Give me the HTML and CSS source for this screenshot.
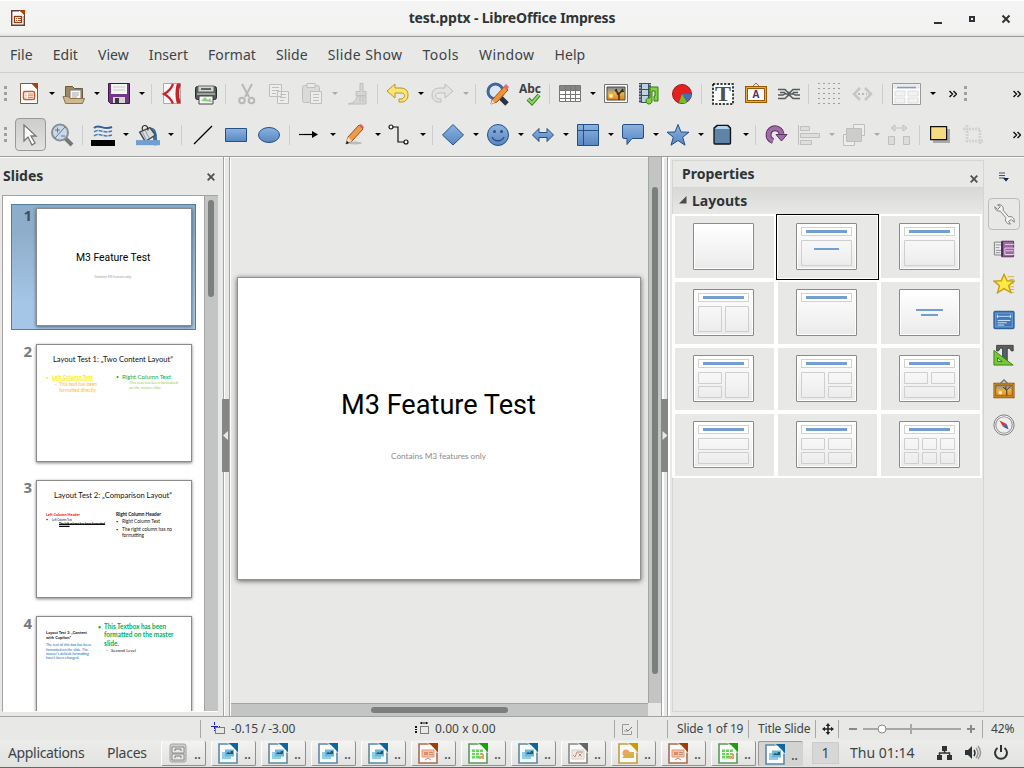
FILE: index.html
```html
<!DOCTYPE html>
<html lang="en">
<head>
<meta charset="utf-8">
<title>test.pptx - LibreOffice Impress</title>
<link rel="stylesheet" href="styles.css">
</head>
<body>
<svg class="sprite" width="0" height="0">
<defs>
<linearGradient id="blue" x2="0" y2="1"><stop offset="0" stop-color="#8db3df"/><stop offset="1" stop-color="#5786c2"/></linearGradient>
<linearGradient id="page" x2="0" y2="1"><stop offset="0" stop-color="#fff"/><stop offset="1" stop-color="#ebebeb"/></linearGradient>
<linearGradient id="sunset" x2="0" y2="1"><stop offset="0" stop-color="#6a88a8"/><stop offset=".5" stop-color="#e9b14c"/><stop offset="1" stop-color="#e67e13"/></linearGradient>
<symbol id="writer" viewBox="0 0 20 21"><path d="M1 1H14L19 7V20H1Z" fill="#fafafa" stroke="#5e88a5" stroke-width="1.6"/><path d="M11 0H20V9Z" fill="#0c66a4"/><path d="M10 .5L19.5 10" stroke="#fff"/><path d="M4 9h9v7H4Z" fill="#8fcde8"/><path d="M7 6.500h9v7H7Z" fill="#6db6da"/><path d="M8 11l2-2 2 1 1-2h2v3H8Z" fill="#1c5a74"/></symbol>
<symbol id="impress" viewBox="0 0 20 21"><path d="M1 1H14L19 7V20H1Z" fill="#fafafa" stroke="#a76c50" stroke-width="1.600"/><path d="M11 0H20V9Z" fill="#a33e03"/><path d="M10 .5L19.500 10" stroke="#fff"/><path d="M4 7h12v7H4Z" fill="#f8c0a2" stroke="#e09a7c"/><path d="M6 9h4v3H6z" fill="#e28a64"/><path d="M11 9.500h4M11 11.500h4M7 17l3-2 3 2" fill="none" stroke="#c98a70"/></symbol>
<symbol id="calc" viewBox="0 0 20 21"><path d="M1 1H14L19 7V20H1Z" fill="#fafafa" stroke="#5b985b" stroke-width="1.600"/><path d="M11 0H20V9Z" fill="#18a303"/><path d="M10 .5L19.500 10" stroke="#fff"/><path d="M4 6.500h11v9H4z" fill="#6fcf60"/><path d="M4 9.500h11M4 12.500h11M7.500 6.500v9M11.500 6.500v9" stroke="#e6ffe3"/><path d="M11 16v-3h2v3m1 0v-5h2v5" fill="#e6a36d"/></symbol>
<symbol id="math" viewBox="0 0 20 21"><path d="M1 1H14L19 7V20H1Z" fill="#fafafa" stroke="#888" stroke-width="1.600"/><path d="M11 0H20V9Z" fill="#666"/><path d="M10 .5L19.500 10" stroke="#fff"/><path d="M4 7h12v9H4z" fill="#f2e8df" stroke="#d9cdc4"/><path d="M5 12l2 2 2-5h6M10.500 10.500l3 3m0-3l-3 3" fill="none" stroke="#b0938a"/></symbol>
<symbol id="draw" viewBox="0 0 20 21"><path d="M1 1H14L19 7V20H1Z" fill="#fafafa" stroke="#c19e3f" stroke-width="1.600"/><path d="M11 0H20V9Z" fill="#c99c00"/><path d="M10 .5L19.500 10" stroke="#fff"/><circle cx="8" cy="10" r="3.500" fill="#eda363"/><path d="M4 15l4-4 4 4zM10 9h6v6h-6z" fill="#d9b04a"/></symbol>
<symbol id="cabinet" viewBox="0 0 20 21"><rect x="2" y="1" width="16" height="18" rx="2" fill="#d0d0cd" stroke="#a2a29f"/><path d="M4 4h12v6H4zM4 11h12v6H4z" fill="#e8e8e5" stroke="#8b8b89"/><path d="M7 8V6h6v2M7 15v-2h6v2" fill="none" stroke="#777"/></symbol>
<symbol id="frame" viewBox="0 0 61 47"><rect x=".5" y=".5" width="60" height="46" rx=".5" fill="#fff" stroke="#8b8b89"/><rect x="2" y="2" width="57" height="43" fill="url(#page)"/></symbol>
<symbol id="titled" viewBox="0 0 61 47"><use href="#frame"/><rect x="5.500" y="4.500" width="50" height="8" fill="#fff" stroke="#d2d2d2"/><path d="M10 7h41v3H10z" fill="#729fcf"/></symbol>
</defs>
</svg>

<header class="titlebar">
  <svg class="app-icon" viewBox="0 0 14 16"><path d="M.7.700H10L13.300 4v11.300H.7Z" fill="#fafafa" stroke="#5b4137" stroke-width="1.400"/><path d="M8 0h6v5z" fill="#b04100"/><path d="M8 1l5 5" stroke="#fff"/><rect x="3.500" y="6.500" width="7" height="6" fill="#fff" stroke="#8d3b13" stroke-width="1.300"/><path d="M5 8.500h1M7 8.500h3M5 10.500h1M7 10.500h3" stroke="#a44a1f"/></svg>
  <h1 class="window-title">test.pptx - LibreOffice Impress</h1>
  <svg class="window-buttons" viewBox="0 0 80 14"><path d="M2 12h8" stroke="#2e3436" stroke-width="2"/><rect x="38" y="6" width="4" height="4" fill="none" stroke="#2e3436" stroke-width="2"/><path d="M70.500 4.500l7 7m0-7l-7 7" stroke="#2e3436" stroke-width="2"/></svg>
</header>

<nav class="menubar"><span>File</span><span>Edit</span><span>View</span><span>Insert</span><span>Format</span><span>Slide</span><span class="m-show">Slide Show</span><span class="m-tools">Tools</span><span class="m-win">Window</span><span>Help</span></nav>

<div class="toolbar">
  <i class="grip"></i>
  <svg class="ic" viewBox="0 0 24 24"><path d="M3.500 1.500H15L20.500 7v14.500h-17z" fill="#fcfcfc" stroke="#7d5948"/><path d="M14 1h7v7z" fill="#a3430f"/><path d="M13 2l7 7" stroke="#fff"/><rect x="6.500" y="9.500" width="11" height="8" rx="1.500" fill="#fff" stroke="#cc5b23" stroke-width="1.500"/><path d="M8.500 12h1M11 12h5M8.500 13.800h1M11 13.800h5M8.500 15.600h1M11 15.600h5" stroke="#d05f29" stroke-width=".8"/></svg><i class="dd"></i>
  <svg class="ic" viewBox="0 0 24 24"><path d="M3.500 16V4.500h7l2 2h8V16" fill="#a08762" stroke="#6c5a3c"/><path d="M8 8h11v10H8z" fill="#f8f8f8" stroke="#777"/><path d="M10 11h7M10 13h7M10 15h5" stroke="#aaa"/><path d="M1 14.500h5l2 2h14.500l-2 5h-17z" fill="#cdb890" stroke="#8c744b"/></svg><i class="dd"></i>
  <svg class="ic" viewBox="0 0 24 24"><path d="M1.500 1.500h21v20h-19l-2-2z" fill="#743687" stroke="#3f174d"/><path d="M4 2h16v10H4z" fill="#f4f4f1"/><path d="M6 5h12M6 8h12" stroke="#c8c8c5"/><path d="M6 15h12v6H6z" fill="#d6d6d1"/><path d="M8 16h4v5H8z" fill="#41354a"/></svg><i class="dd"></i><i class="sep"></i>
  <svg class="ic" viewBox="0 0 24 24"><path d="M3.500 1.500h17v20h-17z" fill="#f8f8f8" stroke="#aaa"/><path d="M17 1.500c-2 5-2 15 0 20h3.500v-2c-2-5-2-11 0-16v-2z" fill="#c72329"/><path d="M13 2C11 7 8 10 4 12c4 2 7 5 9 9.500" fill="none" stroke="#c72329" stroke-width="2.200"/></svg>
  <svg class="ic nudge" viewBox="0 0 24 24"><rect x="1.500" y="4.500" width="21" height="13" rx="2" fill="#525a59" stroke="#252b2b"/><path d="M4 4h16v6H4z" fill="#d2d5d4" stroke="#666"/><path d="M7 7h10" stroke="#606564" stroke-width="2"/><path d="M3 12h18" stroke="#9ba19f" stroke-width="2"/><path d="M5 14h14v8H5z" fill="#f6f6f6" stroke="#444"/><path d="M7 19l4-4 3 3 2-2 2 4z" fill="#8bd084"/></svg><i class="sep"></i>
  <svg class="ic faded" viewBox="0 0 24 24" fill="none" stroke="#777"><path d="M8 2l7 13M18 2l-7 13" stroke-width="2"/><circle cx="8" cy="18.500" r="2.800" stroke-width="2"/><circle cx="17.500" cy="18.500" r="2.800" stroke-width="2"/></svg>
  <svg class="ic faded" viewBox="0 0 24 24" fill="#f4f4f4" stroke="#888"><path d="M2.500 2.500h12v12h-12zM10.500 9.500h11v12h-11z"/><path d="M5 5.500h7M5 8.500h7M5 11.500h4M13 12.500h6M13 15.500h6M13 18.500h4"/></svg>
  <svg class="ic faded" viewBox="0 0 24 24" fill="#c7c7c5" stroke="#888"><rect x="2.500" y="3.500" width="17" height="17" rx="2"/><path d="M7 1.500h8v4H7z" fill="#eee"/><path d="M10.500 9.500h11v12h-11z" fill="#f4f4f4"/><path d="M13 12.500h6M13 15.500h6M13 18.500h6"/></svg><i class="dd off"></i>
  <svg class="ic faded" viewBox="0 0 24 24" fill="#bbb" stroke="#888"><path d="M15 1.500h3v8h3v4H11v-4h4zM12 14h9v8H3c5-1 8-3 9-8z"/><path d="M15 15v5M18 15v5"/></svg><i class="sep"></i>
  <svg class="ic" viewBox="0 0 24 24"><path d="M1 9l8-7v4h5c6 0 8 3 8 7s-2 6-5 7h-4v-3h3c4-2 3-6-1-6H9v5z" fill="#fbe478" stroke="#b99620" stroke-linejoin="round"/></svg><i class="dd"></i>
  <svg class="ic faded" viewBox="0 0 24 24"><path d="M22 9l-8-7v4H9C3 6 1 9 1 13s2 6 5 7h4v-3H7c-4-2-3-6 1-6h6v5z" fill="#ddd" stroke="#888"/></svg><i class="dd off"></i><i class="sep"></i>
  <svg class="ic nudge" viewBox="0 0 24 24"><path d="M15 15l7 7" stroke="#28343f" stroke-width="5"/><circle cx="10.500" cy="9.500" r="7.500" fill="#dce6f1" stroke="#3f65a3" stroke-width="3"/><path d="M7 18L19 5l4 3-11 12-6 2z" fill="#f29436" stroke="#9d5723"/><path d="M18 5l3-3 3 3-2 3z" fill="#e96a66"/><path d="M7 18l3 3-4 1z" fill="#eee1bb"/></svg>
  <svg class="ic abc nudge" viewBox="0 0 24 24"><text x="1" y="11" textLength="22" lengthAdjust="spacingAndGlyphs">Abc</text><path d="M10 17l4 4 7-8" fill="none" stroke="#357f20" stroke-width="4"/><path d="M10 17l4 4 7-8" fill="none" stroke="#8ed766" stroke-width="2"/></svg><i class="sep"></i>
  <svg class="ic" viewBox="0 0 24 24"><path d="M1.500 3.500h21v16h-21z" fill="#fff" stroke="#777"/><path d="M2 4h20v4H2z" fill="#858583"/><path d="M2 8.500h20M2 12.500h20M2 16.500h20M7.500 4v15M12.500 4v15M17.500 4v15" stroke="#777" fill="none"/></svg><i class="dd"></i>
  <svg class="ic nudge" viewBox="0 0 24 24"><path d="M.5 2.500h23v18H.5z" fill="#fff" stroke="#777"/><path d="M3 5h18v13H3z" fill="url(#sunset)" stroke="#544b3e"/><path d="M15 18v-6l-4-4M15 12l4-5M14 13l-2-6M16 10l4-1" fill="none" stroke="#392d1b" stroke-width="1.500"/><circle cx="7" cy="14" r="2" fill="#fff4a4"/></svg>
  <svg class="ic nudge" viewBox="0 0 24 24"><path d="M2 1h12v20H2z" fill="#405064"/><path d="M5 2h6v5H5zM5 8h6v5H5zM5 14h6v6H5z" fill="#bfd0de"/><path d="M3 2v19M13 2v19" stroke="#fff" stroke-dasharray="1.500 1.500"/><path d="M13 5h8v14h-4v-5h1V9h-3v10c0 4-6 4-6 0 0-3 2-3 4-3z" fill="#80d13b" stroke="#347c16"/></svg>
  <svg class="ic nudge" viewBox="0 0 24 24"><circle cx="12" cy="12" r="9.500" fill="#e42021" stroke="#991a1a"/><path d="M12 12h9.500a9.500 9.500 0 0 1-5 8z" fill="#4272b5"/><path d="M12 12l5 8.500a10 10 0 0 1-8 0z" fill="#70bf25"/></svg><i class="sep"></i>
  <svg class="ic serif nudge" viewBox="0 0 24 24"><path d="M2 2h20v20H2z" fill="#fff" stroke="#000" stroke-width="1.500" stroke-dasharray="2.200 1.500"/><text x="4" y="19" textLength="16" lengthAdjust="spacingAndGlyphs">T</text></svg>
  <svg class="ic fw nudge" viewBox="0 0 24 24"><path d="M8 5l4-4 4 4" fill="none" stroke="#777"/><path d="M2.500 5.500h19v14h-19z" fill="#fff" stroke="#9a5900" stroke-width="3"/><path d="M2.500 5.500h19v14h-19z" fill="none" stroke="#e4aa4d"/><text x="8.500" y="16">A</text></svg>
  <svg class="ic nudge" viewBox="0 0 24 24" fill="none" stroke="#555b5b" stroke-width="1.500"><path d="M1 7.500h7l3 3h2l3-3h7M3 10.500h5M16 10.500h5M8 12h8M1 13h5l3-2M23 13h-5l-3-2M1 16.500h7l3-3h2l3 3h7"/></svg><i class="sep"></i>
  <svg class="ic" viewBox="0 0 24 24"><path d="M1.500 1.500h22M1.500 6.500h22M1.500 11.500h22M1.500 16.500h22M1.500 21.500h22" stroke="#555" stroke-dasharray="1 4"/></svg>
  <svg class="ic faded" viewBox="0 0 24 24"><path d="M10 6l-6 6 6 6M15 6l6 6-6 6" fill="none" stroke="#999" stroke-width="2.500"/><path d="M8 12h9" stroke="#777" stroke-width="2" stroke-dasharray="2"/></svg><i class="sep"></i>
  <svg class="ic wide" viewBox="0 0 29 22"><path d="M.5.500h28v21H.5z" fill="#fff" stroke="#999"/><path d="M2 2h25v3H2zM3 8h10v5H3zM16 8h10v5H16zM3 15h10v5H3zM16 15h10v5H16z" fill="#f2f2f2" stroke="#ddd"/><path d="M5 4.500h19" stroke="#729fcf" stroke-width="1.500"/></svg><i class="dd"></i>
  <svg class="more first" viewBox="0 0 8 8"><path d="M.5 1l3 3-3 3M4.500 1l3 3-3 3" /></svg><i class="grip second"></i>
  <svg class="more last" viewBox="0 0 8 8"><path d="M.5 1l3 3-3 3M4.500 1l3 3-3 3"/></svg>
</div>

<div class="toolbar drawing">
  <i class="grip"></i>
  <span class="pressed"><svg class="ic" viewBox="0 0 24 24"><path d="M6 2v16l4-4 4 8 3-2-4-7h5z" fill="#fff" stroke="#777" stroke-width="1.300"/></svg></span>
  <svg class="ic" viewBox="0 0 24 24"><path d="M15 15l7 7" stroke="#777" stroke-width="4"/><circle cx="10" cy="9.500" r="8" fill="#cbd8e7" stroke="#888f99" stroke-width="2"/><path d="M15 4L5 15M5 7h5M7.500 4.500v5M11 13h4" stroke="#637588"/></svg><i class="sep"></i>
  <svg class="ic" viewBox="0 0 24 24"><path d="M3 5c5-5 9 3 18-1" fill="none" stroke="#345f9d" stroke-width="2"/><path d="M3 9c5-4 9 2 18-1M3 13c5-4 9 2 18-1" fill="none" stroke="#4478bd" stroke-width="1.500" stroke-dasharray="4 1"/><path d="M0 17h24v6H0z"/></svg><i class="dd"></i>
  <svg class="ic" viewBox="0 0 26 24"><path d="M15 4c7 0 8 5 8 19h-4c0-9-1-13-5-13z" fill="#3571ab"/><path d="M4 9l11-5 6 8-11 7z" fill="#d9dcdc" stroke="#454b4c" stroke-width="1.500"/><path d="M7 9l4 8M10 7l4 8" stroke="#8d9395"/><path d="M7 7c-2-7 6-7 6 0" fill="none" stroke="#222" stroke-width="1.200"/><path d="M0 17.500h26v5.500H0z" fill="#729fcf"/></svg><i class="dd"></i><i class="sep ten"></i>
  <svg class="ic" viewBox="0 0 24 24"><path d="M3 21L21 3" stroke="#000" stroke-width="1.200"/></svg>
  <svg class="ic" viewBox="0 0 24 24"><path d="M1.500 5.500h21v13h-21z" fill="url(#blue)" stroke="#244f87"/></svg>
  <svg class="ic" viewBox="0 0 24 24"><ellipse cx="12" cy="12" rx="10.500" ry="7.500" fill="url(#blue)" stroke="#244f87"/></svg><i class="sep"></i>
  <svg class="ic" viewBox="0 0 24 24"><path d="M1 11.500h15" stroke="#000" stroke-width="1.200"/><path d="M14 8l6 3.500-6 3.500z"/></svg><i class="dd"></i>
  <svg class="ic" viewBox="0 0 24 24"><ellipse cx="12" cy="20" rx="7" ry="1.500" fill="#bbb"/><path d="M5 14L16 2l4 4L9 18l-6 3z" fill="#f19a4b" stroke="#925128"/><path d="M16 2l2-1 3 3-1 2z" fill="#dc6767"/><path d="M5 14l4 4-6 3z" fill="#f0dec0"/><path d="M3 21l1-3 2 2z"/></svg><i class="dd"></i>
  <svg class="ic" viewBox="0 0 24 24" fill="none" stroke="#111" stroke-width="1.200"><path d="M4 4h6v15h7"/><circle cx="3" cy="4" r="2" fill="#fff"/><circle cx="18" cy="19" r="2" fill="#fff"/></svg><i class="dd"></i><i class="sep"></i>
  <svg class="ic" viewBox="0 0 24 24"><path d="M12 1.500L22.500 12 12 22 1.500 12z" fill="url(#blue)" stroke="#244f87"/></svg><i class="dd"></i>
  <svg class="ic" viewBox="0 0 24 24"><circle cx="12" cy="12" r="10.500" fill="url(#blue)" stroke="#244f87"/><path d="M6 14c2 5 10 5 12 0" fill="none" stroke="#244f87" stroke-width="1.300"/><circle cx="8.500" cy="8.500" r="1.500" fill="#244f87"/><circle cx="15.500" cy="8.500" r="1.500" fill="#244f87"/></svg><i class="dd"></i>
  <svg class="ic" viewBox="0 0 24 24"><path d="M1.500 12L8 5.500v4h8v-4L22.500 12 16 18.500v-4H8v4z" fill="url(#blue)" stroke="#244f87"/></svg><i class="dd"></i>
  <svg class="ic" viewBox="0 0 24 24"><path d="M1.500 1.500h21v21h-21z" fill="url(#blue)" stroke="#244f87"/><path d="M2 7.500h20M7.500 2v20" stroke="#244f87"/></svg><i class="dd"></i>
  <svg class="ic" viewBox="0 0 24 24"><path d="M3 1.500h18q1.500 0 1.500 1.500v11q0 1.500-1.500 1.500H11l-5 6v-6H3q-1.500 0-1.500-1.500V3q0-1.500 1.500-1.500z" fill="url(#blue)" stroke="#244f87"/></svg><i class="dd"></i>
  <svg class="ic" viewBox="0 0 24 24"><path d="M12 1.500l3 7.500 8 .2-6.300 5 2.300 8-7-4.700-7 4.700 2.300-8L1 9.200 9 9z" fill="url(#blue)" stroke="#244f87"/></svg><i class="dd"></i>
  <svg class="ic" viewBox="0 0 24 24"><path d="M3 5l3-2.500h11L19.500 5v15q0 1-1 1H4q-1 0-1-1z" fill="#5e84aa" stroke="#111" stroke-width="1.300"/><path d="M4 6l3-3h9l2.500 3z" fill="#b3d2ed"/></svg><i class="dd"></i><i class="sep"></i>
  <svg class="ic" viewBox="0 0 24 24"><path d="M9 18a6.500 6.500 0 1 1 8.500-7" fill="none" stroke="#5c2f65" stroke-width="6"/><path d="M9 18a6.500 6.500 0 1 1 8.500-7" fill="none" stroke="#a06ca4" stroke-width="4"/><path d="M12 11.500h11l-5.500 6.500z" fill="#a06ca4" stroke="#5c2f65"/></svg>
  <svg class="ic faded" viewBox="0 0 24 24" fill="#d2d2d2" stroke="#888"><path d="M1.500 2v20M3.500 3.500h9v4h-9zM3.500 10.500h19v4h-19zM3.500 17.500h11v4h-11z"/></svg><i class="dd off"></i>
  <svg class="ic faded" viewBox="0 0 24 24" fill="#f5f5f5" stroke="#888"><path d="M11.500 1.500h11v11h-11zM1.500 11.500h11v11h-11z"/><path d="M4.500 5.500h15v13h-15z" fill="#aaa"/></svg><i class="dd off"></i>
  <svg class="ic faded" viewBox="0 0 24 24" fill="#ccc" stroke="#888"><path d="M1.500 13.500h6v8h-6zM16.500 13.500h6v8h-6zM9 5h6M4 5l4-3v6zM20 5l-4-3v6z"/></svg><i class="sep"></i>
  <svg class="ic" viewBox="0 0 24 24"><path d="M5 6h17v14H5z" fill="#999" opacity=".8"/><path d="M2.600 3.600h16v13h-16z" fill="#f5db82" stroke="#111" stroke-width="1.200"/></svg>
  <svg class="ic faded crop" viewBox="0 0 24 24" fill="none" stroke="#999"><path d="M2 6h17v16M6 2v16h16" stroke-width="3" stroke-dasharray="2 1"/></svg>
  <svg class="more last" viewBox="0 0 8 8"><path d="M.5 1l3 3-3 3M4.500 1l3 3-3 3"/></svg>
</div>

<main class="workspace">
  <aside class="slides-panel">
    <div class="panel-head"><h2>Slides</h2><svg class="close" viewBox="0 0 8 8"><path d="M.7.700l6.600 6.600m0-6.600L.7 7.300"/></svg></div>
    <div class="slide-list">
      <div class="slide-items">
        <div class="item selected"><b>1</b><svg class="thumb" viewBox="36 208 156 118"><text class="rob" x="76" y="261" font-size="10.500" textLength="74.500" lengthAdjust="spacingAndGlyphs">M3 Feature Test</text><text x="94.500" y="278" font-size="3.800" fill="#999" textLength="37" lengthAdjust="spacingAndGlyphs">Contains M3 features only</text></svg></div>
        <div class="item"><b>2</b><svg class="thumb" viewBox="36 344 156 118">
          <text x="53" y="361.500" font-size="7.600" textLength="120" lengthAdjust="spacingAndGlyphs">Layout Test 1: „Two Content Layout“</text>
          <g fill="#f8f000" font-weight="bold"><text x="46" y="379" font-size="4">•</text><text x="52" y="379" font-size="5.800" textLength="41" lengthAdjust="spacingAndGlyphs">Left Column Text</text><path d="M52 379.500h41v1H52z"/></g>
          <g fill="#f7bd3d" font-size="4.800"><text x="54" y="386">–</text><text x="59" y="386" textLength="38" lengthAdjust="spacingAndGlyphs">This text has been</text><text x="59" y="392" textLength="37" lengthAdjust="spacingAndGlyphs">formatted directly</text></g>
          <g fill="#00b050"><text x="116" y="379" font-size="5">•</text><text x="122" y="379" font-size="5.800" textLength="49" lengthAdjust="spacingAndGlyphs">Right Column Text</text></g>
          <g fill="#92d050" font-size="3.800"><text x="124" y="384">–</text><text x="129" y="384" textLength="49" lengthAdjust="spacingAndGlyphs">This text has been formatted</text><text x="129" y="389" textLength="32" lengthAdjust="spacingAndGlyphs">on the master slide</text></g>
        </svg></div>
        <div class="item"><b>3</b><svg class="thumb" viewBox="36 480 156 118">
          <text x="54" y="497.500" font-size="7.600" textLength="118" lengthAdjust="spacingAndGlyphs">Layout Test 2: „Comparison Layout“</text>
          <text x="46" y="516" font-size="4.500" font-weight="bold" fill="#f00" textLength="34" lengthAdjust="spacingAndGlyphs">Left Column Header</text>
          <text x="46" y="521" font-size="3.500">•</text><text x="52" y="521" font-size="3.800" textLength="20" lengthAdjust="spacingAndGlyphs">Left Column Text</text>
          <text x="59" y="525" font-size="3" font-weight="900" textLength="46" lengthAdjust="spacingAndGlyphs">The left column has been formatted</text><path d="M59 523.800h46v1.200H59zM59 525.800h10.500v1.300H59z"/>
          <text x="116" y="516" font-size="5" font-weight="bold" textLength="45" lengthAdjust="spacingAndGlyphs">Right Column Header</text>
          <g font-size="5"><text x="116" y="523" font-size="4">•</text><text x="122" y="523" textLength="38" lengthAdjust="spacingAndGlyphs">Right Column Text</text><text x="116" y="531" font-size="4">•</text><text x="122" y="531" textLength="50" lengthAdjust="spacingAndGlyphs">The right column has no</text><text x="122" y="536.500" textLength="22" lengthAdjust="spacingAndGlyphs">formatting</text></g>
        </svg></div>
        <div class="item"><b>4</b><svg class="thumb" viewBox="36 616 156 118">
          <g font-size="3.900" font-weight="bold"><text x="46" y="634" textLength="41" lengthAdjust="spacingAndGlyphs">Layout Test 3: „Content</text><text x="46" y="639" textLength="25" lengthAdjust="spacingAndGlyphs">with Caption“</text></g>
          <g font-size="3.900" fill="#0070c0"><text x="46" y="646" textLength="45" lengthAdjust="spacingAndGlyphs">The text of this box has been</text><text x="46" y="650.500" textLength="42" lengthAdjust="spacingAndGlyphs">formatted on the slide. The</text><text x="46" y="655" textLength="43" lengthAdjust="spacingAndGlyphs">master's default formatting</text><text x="46" y="659.300" textLength="33" lengthAdjust="spacingAndGlyphs">hasn't been changed.</text></g>
          <g font-size="7" font-weight="bold" fill="#00b050"><text x="98" y="628.500" font-size="5">•</text><text x="104" y="628.500" textLength="62" lengthAdjust="spacingAndGlyphs">This Textbox has been</text><text x="104" y="637" textLength="69.500" lengthAdjust="spacingAndGlyphs">formatted on the master</text><text x="104" y="646" textLength="15" lengthAdjust="spacingAndGlyphs">slide.</text></g>
          <g font-size="3.900"><text x="106" y="652">–</text><text x="111" y="652" textLength="25" lengthAdjust="spacingAndGlyphs">Second Level</text></g>
        </svg></div>
      </div>
      <div class="scroll-lane"><i></i></div>
    </div>
  </aside>
  <div class="splitter left"><svg viewBox="0 0 7 73"><path d="M6 32v9L1 36.500z"/></svg></div>

  <section class="editor">
    <div class="canvas"><svg class="slide" viewBox="238 278 402 301"><text class="rob" x="341" y="413.500" font-size="28" textLength="195" lengthAdjust="spacingAndGlyphs">M3 Feature Test</text><text x="391" y="459" font-size="7.800" fill="#8b8b8b" textLength="95" lengthAdjust="spacingAndGlyphs">Contains M3 features only</text></svg></div>
    <div class="v-lane"><i></i></div>
    <div class="h-lane"><i></i></div>
    <div class="corner"></div>
  </section>
  <div class="splitter right"><svg viewBox="0 0 7 73"><path d="M1.500 32v9l5-4.500z"/></svg></div>

  <aside class="properties">
    <div class="prop-head"><h2>Properties</h2><svg class="close" viewBox="0 0 8 8"><path d="M.7.700l6.600 6.600m0-6.600L.7 7.300"/></svg></div>
    <div class="prop-section"><svg viewBox="0 0 8 8"><path d="M7.500 0v7.500H0z"/></svg><h3>Layouts</h3></div>
    <div class="layouts">
      <div><svg viewBox="0 0 61 47"><use href="#frame"/></svg></div>
      <div class="chosen"><svg viewBox="0 0 61 47"><use href="#titled"/><path d="M5.500 17.500h50v25h-50z"/><path class="bar" d="M18 25h25v2H18z"/></svg></div>
      <div><svg viewBox="0 0 61 47"><use href="#titled"/><path d="M5.500 17.500h50v25h-50z"/></svg></div>
      <div><svg viewBox="0 0 61 47"><use href="#titled"/><path d="M5.500 17.500h23v25h-23zM32.500 17.500h23v25h-23z"/></svg></div>
      <div><svg viewBox="0 0 61 47"><use href="#titled"/></svg></div>
      <div><svg viewBox="0 0 61 47"><use href="#frame"/><path class="bar" d="M17 20h27v2H17zM22 25h17v2H22z"/></svg></div>
      <div><svg viewBox="0 0 61 47"><use href="#titled"/><path d="M5.500 17.500h23v11h-23zM5.500 31.500h23v11h-23zM32.500 17.500h23v25h-23z"/></svg></div>
      <div><svg viewBox="0 0 61 47"><use href="#titled"/><path d="M32.500 17.500h23v11h-23zM32.500 31.500h23v11h-23zM5.500 17.500h23v25h-23z"/></svg></div>
      <div><svg viewBox="0 0 61 47"><use href="#titled"/><path d="M5.500 17.500h23v11h-23zM32.500 17.500h23v11h-23zM5.500 31.500h50v11h-50z"/></svg></div>
      <div><svg viewBox="0 0 61 47"><use href="#titled"/><path d="M5.500 17.500h50v11h-50zM5.500 31.500h50v11h-50z"/></svg></div>
      <div><svg viewBox="0 0 61 47"><use href="#titled"/><path d="M5.500 17.500h23v11h-23zM32.500 17.500h23v11h-23zM5.500 31.500h23v11h-23zM32.500 31.500h23v11h-23z"/></svg></div>
      <div><svg viewBox="0 0 61 47"><use href="#titled"/><path d="M5.500 17.500h14v11h-14zM23.500 17.500h14v11h-14zM41.500 17.500h14v11h-14zM5.500 31.500h14v11h-14zM23.500 31.500h14v11h-14zM41.500 31.500h14v11h-14z"/></svg></div>
    </div>
  </aside>
  <nav class="deck-tabs">
    <svg class="tab-menu" viewBox="0 0 10 10"><path d="M0 1h6M0 3.500h6M0 6h6" stroke="#415075" stroke-width="1.200"/><path d="M4 6h6L7 9.500z" fill="#14204a"/></svg>
    <span class="tab active"><svg viewBox="0 0 24 24"><path d="M2 4l3 3 3-3-3-2c4-1 7 2 6 6l6 7c4-1 7 2 6 6l-3-3-3 2 2 3c-5 0-6-4-5-7L8 9c-4 0-6-2-6-5z" fill="#f4f4f4" stroke="#777"/></svg></span>
    <span class="tab"><svg viewBox="0 0 24 24"><path d="M1.500 4.500h9v14h-9z" fill="#eee" stroke="#777"/><path d="M3 7.500h6M3 10.500h4M3 13.500h6M3 16h5" stroke="#888"/><path d="M9.500 3.500h13v17h-13z" fill="#9c689d" stroke="#512d5d"/><path d="M10 20V4" stroke="#4c2b58" stroke-width="2"/><path d="M13 7h10M13 11h10v7H13zM14 14h8" fill="none" stroke="#ead7ec"/></svg></span>
    <span class="tab"><svg viewBox="0 0 24 24"><path d="M16 4h7M18 7h5M18 11h5M18 15h5M17 18h6M18 21h5" stroke="#d3b332"/><path d="M12 1.500l3.500 7 7.500.3-6 5 2.500 7.500-7.500-4.300L5 21.500l2-7.700-6-5 8-.3z" fill="#fce941" stroke="#c39f13" stroke-width="1.500"/></svg></span>
    <span class="tab"><svg viewBox="0 0 24 24"><rect x="1" y="2.500" width="22" height="19" rx="1" fill="#4079bc" stroke="#194e89"/><rect x="3" y="4.500" width="18" height="15" fill="none" stroke="#7ea9d8" stroke-width=".8"/><path d="M4 8h16M5 6v4M19 6v4" stroke="#cfe2f7"/><path d="M5 12.500h14M5 15h10M5 17.500h7" stroke="#ddecff"/></svg></span>
    <span class="tab"><svg viewBox="0 0 24 24"><path d="M4 1.500h18v6h-2l-2-3h-2.500v14h-5v-14H8l-2 3H4z" fill="#596063" stroke="#343a3d"/><path d="M1 7l21 16H1z" fill="#77c833" stroke="#358019"/><path d="M5 15l5 4H5z" fill="#e8e8e6" stroke="#257c0b"/></svg></span>
    <span class="tab"><svg viewBox="0 0 24 24"><path d="M8 5l4-4 4 4" fill="none" stroke="#777" stroke-width="1.500"/><path d="M2 5.500h20v14H2z" fill="url(#sunset)" stroke="#925300" stroke-width="3"/><path d="M2 5.500h20v14H2z" fill="none" stroke="#dba343"/><path d="M15 18v-6l-4-3m4 3l4-4M14 12V8" stroke="#41311e" fill="none"/><circle cx="8" cy="15" r="2" fill="#fff4a4"/></svg></span>
    <span class="tab"><svg viewBox="0 0 24 24"><circle cx="12" cy="12" r="11" fill="#fafafa" stroke="#737373"/><circle cx="12" cy="12" r="9" fill="#eee" stroke="#999" stroke-width="1.300"/><path d="M7 7l8 4-4 3z" fill="#dd3333"/><path d="M17 17l-2-6-4 3z" fill="#39649b"/></svg></span>
  </nav>
</main>

<footer class="status">
  <div class="s-empty"></div>
  <div class="s-pos"><svg viewBox="0 0 14 14"><path d="M0 4.500h9M3.500 0v9" stroke="#2020c8" stroke-dasharray="3 1"/><path d="M4.500 5.500h9v6h-9z" fill="none" stroke="#111" stroke-dasharray="1 1"/></svg><span class="pos">-0.15 / -3.00</span><svg class="size-icon" viewBox="0 0 14 14"><path d="M5.500 4.500h8v7h-8z" fill="none" stroke="#111" stroke-dasharray="1 1"/><path d="M1 4v8M5.500 1h8" stroke="#111" stroke-width="2" stroke-dasharray="2 1 1 1"/></svg><span class="size">0.00 x 0.00</span></div>
  <div class="s-doc"><svg viewBox="0 0 12 12"><path d="M8 1.500H1.500v10h9V8M3 8h4" fill="none" stroke="#9b9b9b"/><path d="M5 6l2 2 4-4" fill="none" stroke="#777"/></svg></div>
  <div class="s-blank"></div>
  <div class="s-slide">Slide 1 of 19</div>
  <div class="s-title">Title Slide</div>
  <div class="s-fit"><svg viewBox="0 0 12 12"><path d="M6 1v10M1 6h10" stroke="#222" stroke-width="1.500"/><path d="M6 0l2.300 3H3.700zM6 12l2.300-3H3.700zM0 6l3-2.300v4.600zM12 6L9 3.700v4.600z" fill="#222"/></svg></div>
  <div class="s-zoom"><svg viewBox="0 0 128 12"><path d="M1 6h8M119 6h8M123 2v8" stroke="#888a88" stroke-width="2"/><path d="M15 6h98M63 1v10" stroke="#a8a9a7" stroke-width="2"/><circle cx="34" cy="6" r="4" fill="#fff" stroke="#888"/></svg></div>
  <div class="s-percent">42%</div>
</footer>

<footer class="taskbar">
  <span class="apps">Applications</span><span class="places">Places</span>
  <div class="tasks">
    <span class="task"><svg><use href="#cabinet"/></svg>..</span><span class="task"><svg><use href="#writer"/></svg>..</span><span class="task"><svg><use href="#writer"/></svg>..</span><span class="task"><svg><use href="#writer"/></svg>..</span><span class="task"><svg><use href="#writer"/></svg>..</span><span class="task"><svg><use href="#impress"/></svg>..</span><span class="task"><svg><use href="#calc"/></svg>..</span><span class="task"><svg><use href="#writer"/></svg>..</span><span class="task"><svg><use href="#math"/></svg>..</span><span class="task"><svg><use href="#draw"/></svg>..</span><span class="task"><svg><use href="#impress"/></svg>..</span><span class="task"><svg><use href="#calc"/></svg>..</span><span class="task current"><svg><use href="#writer"/></svg>..</span>
  </div>
  <span class="desk">1</span><span class="clock">Thu 01:14</span>
  <svg class="tray" viewBox="0 0 72 16"><path d="M5 1h5v5H5zM0 10h5v5H0zM10 10h5v5h-5z" fill="#2e3436"/><path d="M7.500 5v3M2.500 11V8h10v3" fill="none" stroke="#2e3436" stroke-width="1.500"/><path d="M28 5h3l4-4v13l-4-4h-3z" fill="#2e3436"/><path d="M37 5q2 3 0 6" fill="none" stroke="#2e3436" stroke-width="1.500"/><path d="M39 3q4 5 0 10M41 1q5 7 0 13" fill="none" stroke="#999" stroke-width="1.500"/><path d="M60.500 3a6 6 0 1 0 7 0" fill="none" stroke="#2e3436" stroke-width="2"/><path d="M64 0v7" stroke="#2e3436" stroke-width="2"/></svg>
</footer>
</body>
</html>
```
FILE: styles.css
```css
* { box-sizing: border-box; }
body { margin: 0; width: 1024px; height: 768px; overflow: hidden; display: flex; flex-direction: column; background: #e8e8e6; color: #3d4446; font: 14px "Noto Sans", sans-serif; }
svg { display: block; flex: none; }
h1, h2, h3 { margin: 0; font-size: 14px; white-space: nowrap; color: #2e3436; }
.sprite { position: absolute; }

.titlebar { height: 37px; flex: none; display: grid; grid-template-columns: 100px 1fr 100px; align-items: center; background: linear-gradient(#fff 1px, #f4f4f4 1px, #f2f2f1 33px, #dededc 36px, #9a9b98 36px); }
.app-icon { width: 14px; height: 16px; margin: -1px 0 0 11px; }
.window-title { text-align: center; letter-spacing: -.17px; padding-bottom: 3px; }
.window-buttons { width: 80px; height: 14px; margin: -2px 0 0 8px; }

.menubar { height: 36px; flex: none; display: flex; align-items: center; gap: 20px; padding: 0 10px 1px; border-bottom: 1px solid #cfcfcd; letter-spacing: .06px; }
.menubar span { white-space: nowrap; }
.menubar .m-show { letter-spacing: .42px; }
.menubar .m-tools { letter-spacing: .5px; }
.menubar .m-win { letter-spacing: .4px; }

.toolbar { height: 41px; flex: none; display: flex; align-items: center; padding-left: 4px; }
.ic { width: 24px; height: 24px; margin: 0 4.5px; }
.ic.wide { width: 29px; height: 22px; margin: 0 6px 0 5px; }
.ic.nudge { margin: 0 3.5px 0 5.5px; }
.faded { opacity: .42; }
.crop { opacity: .25; }
.grip { width: 3px; height: 15px; flex: none; margin-right: 5.5px; background: repeating-linear-gradient(#a0a19e 0 3px, transparent 3px 6px); }
.dd { width: 12px; flex: none; display: flex; justify-content: center; }
.dd::after { content: ""; border: 3px solid transparent; border-top-color: #000; border-bottom: 0; }
.dd.off::after { border-top-color: #aaa; }
.sep { width: 8px; height: 20px; flex: none; background: linear-gradient(#cececc, #cececc) center / 1px 100% no-repeat; }
.sep.ten { width: 10px; }
.more { width: 8px; height: 8px; fill: none; stroke: #111; stroke-width: 1.4; }
.more.first { margin-left: 10px; }
.more.last { margin: 0 3px 0 auto; }
.grip.second { margin: 0 0 0 7px; }
.abc { overflow: visible; }
.abc text { font: bold 12px "Open Sans", sans-serif; fill: #3c4042; }
.serif text { font: bold 20px "Liberation Serif", serif; fill: #4c5153; }
.fw text { font: bold 10px "Open Sans", sans-serif; fill: #593265; }
.pressed { width: 31px; height: 33px; flex: none; display: flex; align-items: center; justify-content: center; margin: 0 0 0 2.5px; border: 1px solid #999a97; border-radius: 4px; background: linear-gradient(#cdcecb, #e2e2e0); }
.drawing .grip { margin-right: 5px; }

.workspace { height: 560px; margin-top: 1px; flex: none; display: flex; border-top: 1px solid #9c9d9a; box-shadow: inset 0 1px #fff; }
.slides-panel { width: 222px; padding-top: 1px; }
.panel-head { height: 37px; display: flex; align-items: center; justify-content: space-between; padding: 0 7px 0 3px; }
.panel-head h2 { padding-bottom: 2px; }
.close { width: 8px; height: 8px; stroke: #4c5052; stroke-width: 1.8; fill: none; }
.slide-list { width: 216px; height: 517px; margin-left: 2px; display: flex; overflow: hidden; background: #fff; border: 1px solid #a4a5a2; border-right: 0; border-bottom: 1px solid #fff; }
.slide-items { width: 201px; padding: 8px 8px; }
.item { width: 185px; height: 126px; margin-bottom: 10px; display: flex; padding: 3px; border: 1px solid transparent; color: #777b7c; }
.item b { width: 21px; flex: none; text-align: right; padding-right: 4px; font: bold 15px/15px "Noto Sans", sans-serif; }
.item.selected { background: linear-gradient(#8eadcb 20%, #a5c6e6 80%); border-color: #547da2; }
.item.selected b { color: #41505c; }
.thumb { width: 156px; height: 118px; background: #fff; outline: 1px solid #8b8b8b; outline-offset: -1px; box-shadow: 0 1px 3px rgba(0,0,0,.5); }
.thumb, .slide { font-family: Lato, sans-serif; fill: #111; }
.rob { font-family: Roboto, sans-serif; fill: #000; }
.scroll-lane { width: 14px; background: #c3c5c4; border-left: 1px solid #a4a5a2; padding: 4px 0 0 3px; }
.scroll-lane i { display: block; width: 6px; height: 97px; border-radius: 3px; background: #7b7f7d; }

.splitter { display: flex; align-items: center; padding-bottom: 3px; }
.splitter svg { width: 7px; height: 73px; background: #858784; fill: #e8e8e6; }
.splitter.left { width: 9px; background: linear-gradient(90deg, transparent 1px, #a4a5a2 1px 2px, #fff 2px 3px, transparent 3px 7px, #a4a5a2 7px 8px, #fff 8px); }
.splitter.right { width: 11px; background: linear-gradient(90deg, #a4a5a2 1px, #fff 1px 3px, transparent 3px 6px, #a4a5a2 6px 7px, #fff 7px 9px, transparent 9px); }
.editor { width: 430px; display: grid; grid-template: 546px 13px / 417px 13px; }
.canvas { padding: 120px 0 0 6px; }
.slide { width: 404px; height: 303px; background: #fff; border: 1px solid #929391; box-shadow: 0 1px 5px rgba(0,0,0,.6); }
.v-lane { background: #c3c5c4; border-left: 1px solid #a4a5a2; padding: 30px 0 0 3px; }
.v-lane i { display: block; width: 6px; height: 487px; border-radius: 3px; background: #7b7f7d; }
.h-lane { background: #c3c5c4; border-top: 1px solid #a4a5a2; padding: 3px 0 0 140px; }
.h-lane i { display: block; width: 137px; height: 6px; border-radius: 3px; background: #7c7e7d; }

.properties { width: 312px; height: 552px; margin-top: 3px; border: 1px solid #d5d6d3; }
.prop-head { height: 26px; display: flex; justify-content: space-between; padding: 3px 5px 0 9px; }
.prop-head .close { margin-top: 11px; }
.prop-section { height: 27px; display: flex; align-items: center; gap: 5px; padding: 0 0 1px 6px; background: linear-gradient(#d7d8d5, #e8e8e6); }
.prop-section svg { width: 8px; height: 8px; fill: #4a4d4f; }
.layouts { width: 310px; display: grid; grid-template-columns: repeat(3, 103px); grid-auto-rows: 66px; background: #fff; margin-left: -1px; padding-left: 1px; }
.layouts div { border: 2px solid #fff; background: #e8e8e6; padding: 7px 18px; }
.layouts .chosen { border: 1px solid #000; box-shadow: inset 0 0 0 1px #fff; padding: 8px 19px; }
.layouts svg { width: 61px; height: 47px; fill: none; stroke: #cfcfcf; }
.layouts .bar { fill: #729fcf; stroke: none; }
.layouts use { stroke: none; }
.deck-tabs { width: 40px; display: flex; flex-direction: column; align-items: center; padding-top: 15px; }
.tab-menu { width: 10px; height: 10px; margin-bottom: 16px; }
.tab { width: 32px; height: 32px; margin-bottom: 3.2px; display: flex; align-items: center; justify-content: center; }
.tab.active { border: 1px solid #bcbdbb; border-radius: 4px; }
.tab svg { width: 22px; height: 22px; }

.status { height: 24px; flex: none; display: flex; align-items: center; border-top: 1px solid #a4a5a2; font-size: 12px; white-space: nowrap; letter-spacing: -.15px; }
.status > div { height: 18px; display: flex; align-items: center; border-right: 1px solid #a8a9a6; padding-left: 9px; }
.status .s-empty { width: 201px; }
.status .s-pos { width: 414px; padding-left: 10px; }
.s-pos svg { width: 14px; height: 14px; }
.pos { width: 190px; padding-left: 6px; }
.size { padding-left: 6px; letter-spacing: .04px; }
.status .s-doc { width: 23px; padding-left: 6px; }
.s-doc svg, .s-fit svg { width: 12px; height: 12px; }
.status .s-blank { width: 30px; }
.status .s-slide { width: 81px; }
.status .s-title { width: 67px; }
.status .s-fit { width: 23px; padding-left: 6px; }
.status .s-zoom { width: 144px; }
.s-zoom svg { width: 128px; height: 12px; }
.status .s-percent { border: 0; padding-left: 8px; }

.taskbar { height: 28px; flex: none; display: flex; align-items: center; background: linear-gradient(#ececeb, #e2e2e0); border-bottom: 1px solid #666; white-space: nowrap; padding-left: 8px; }
.apps { width: 99px; letter-spacing: -.35px; padding-bottom: 2px; }
.places { width: 54px; letter-spacing: -.25px; padding-bottom: 2px; }
.tasks { display: flex; gap: 5px; width: 643px; }
.task { width: 45px; height: 25px; display: flex; align-items: center; gap: 6px; padding-left: 6px; flex: none; border-right: 1px solid #8f908d; border-bottom: 1px solid #8f908d; border-left: 1px solid #fff; border-radius: 2px; background: linear-gradient(#f3f3f2, #e2e2e0); letter-spacing: -.5px; }
.task svg { width: 20px; height: 21px; }
.task.current { margin-left: -3px; border: 1px solid #999; border-right: 0; border-bottom: 0; background: #d3d4d2; }
.desk { width: 27px; height: 22px; margin: -2px 11px 0 8px; display: flex; align-items: center; justify-content: center; background: #d7d8d6; border: 1px solid #ccc; }
.clock { width: 87px; padding-bottom: 2px; }
.tray { width: 72px; height: 16px; margin-top: -1px; }
```
